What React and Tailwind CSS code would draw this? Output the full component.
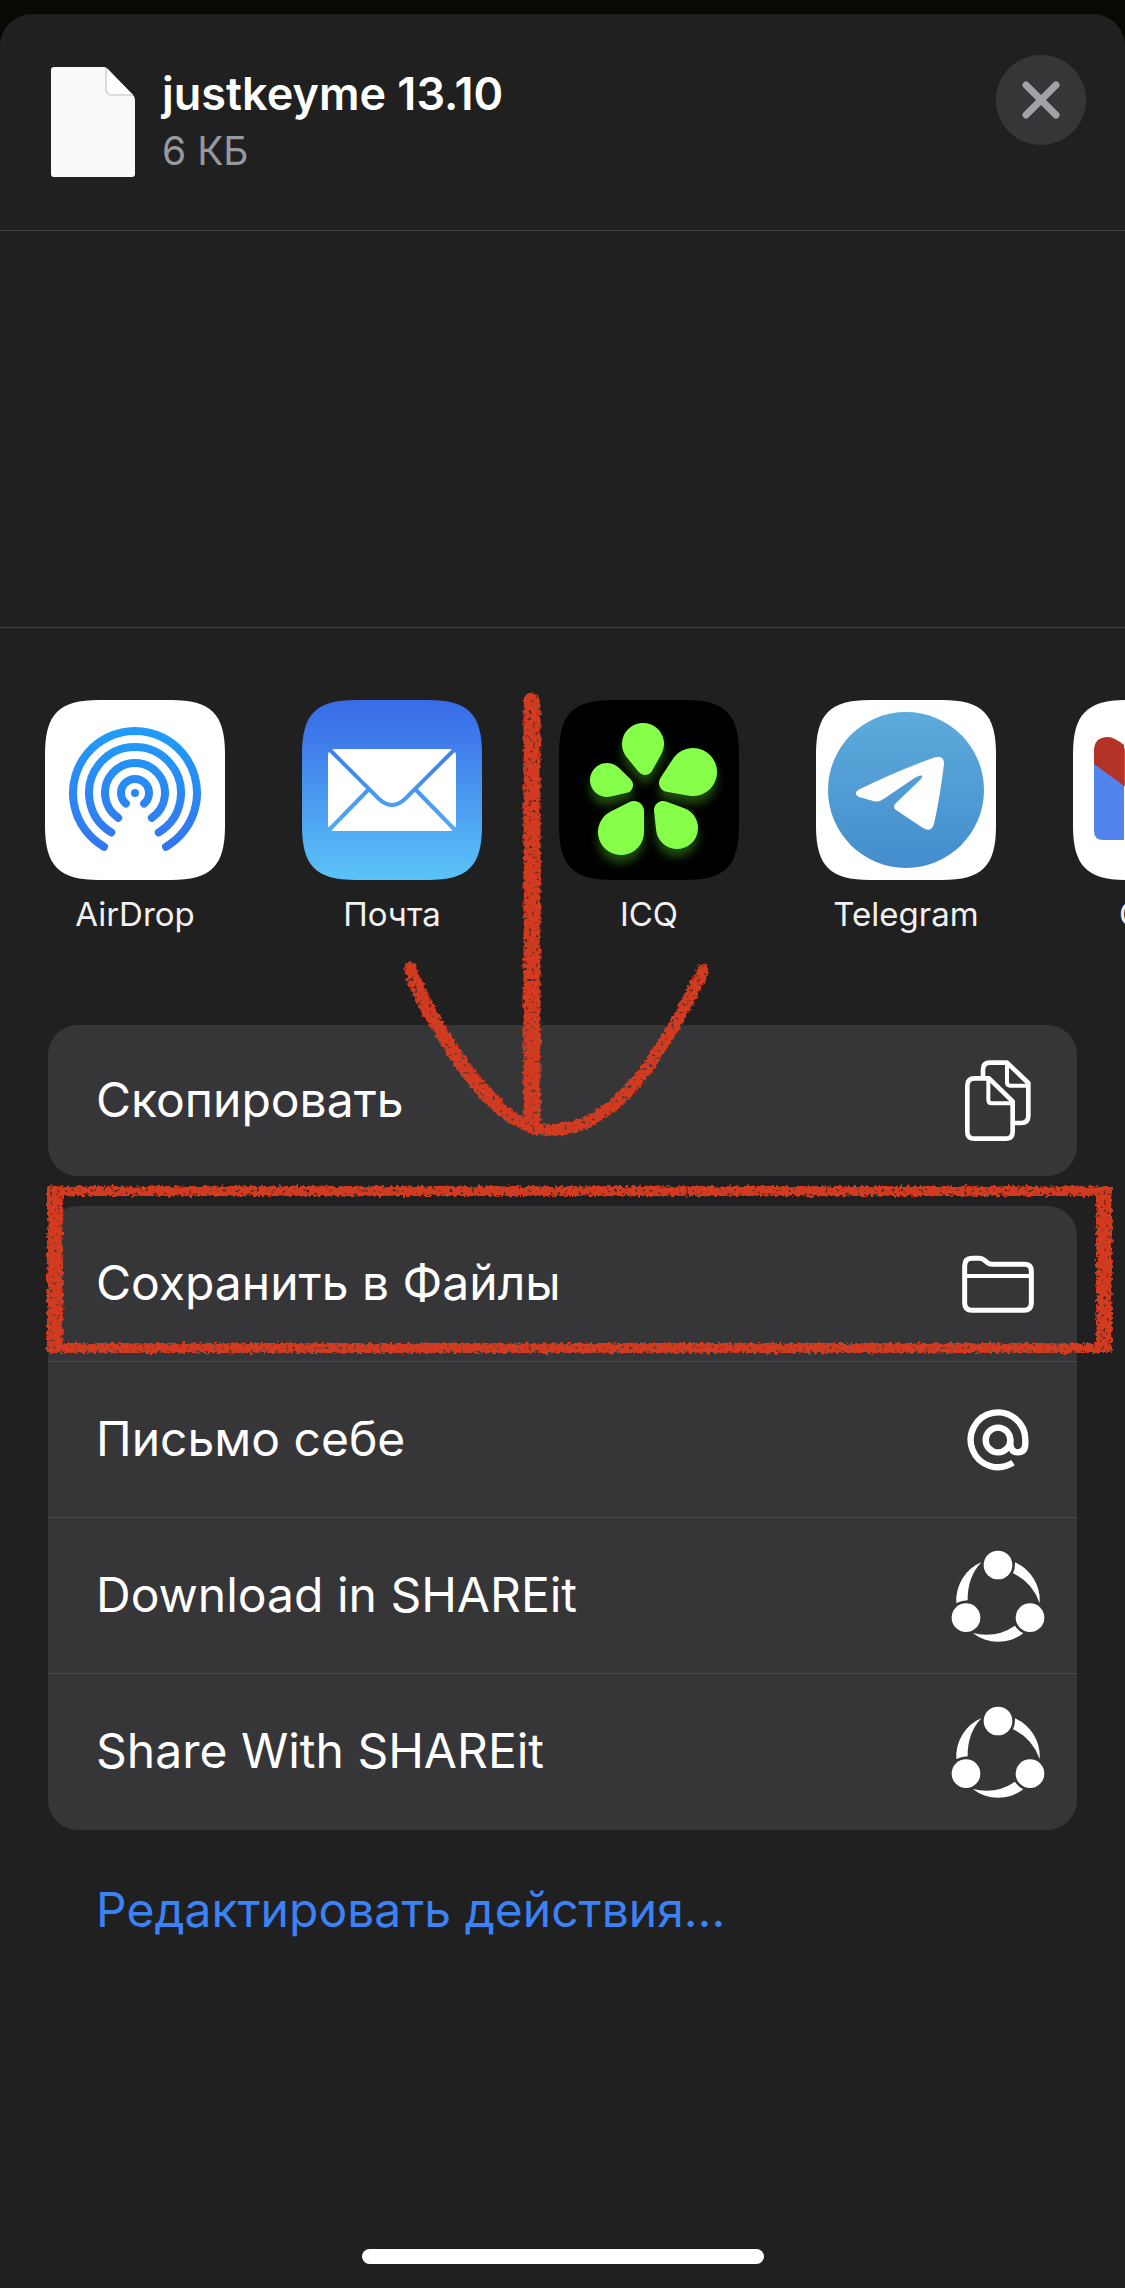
import React from "react";

// Outline around two circles joined by their outer tangents.
function petal(x1, y1, r1, x2, y2, r2) {
  const angle = Math.atan2(y2 - y1, x2 - x1);
  const spread = Math.acos((r1 - r2) / Math.hypot(x2 - x1, y2 - y1));
  const at = (x, y, r, t) => `${x + r * Math.cos(t)} ${y + r * Math.sin(t)}`;
  return `M${at(x1, y1, r1, angle + spread)} A${r1} ${r1} 0 1 1 ${at(x1, y1, r1, angle - spread)} L${at(x2, y2, r2, angle - spread)} A${r2} ${r2} 0 0 1 ${at(x2, y2, r2, angle + spread)} Z`;
}

function arc(r, degrees) {
  const t = (degrees * Math.PI) / 180;
  const dx = r * Math.sin(t);
  const dy = r * Math.cos(t);
  return `M${90 - dx} ${93 + dy} A${r} ${r} 0 1 1 ${90 + dx} ${93 + dy}`;
}

const SQUIRCLE =
  "M0 54 C0 14 14 0 54 0 H126 C166 0 180 14 180 54 V126 C180 166 166 180 126 180 H54 C14 180 0 166 0 126 Z";

function Tile({ fill, children }) {
  return (
    <svg viewBox="0 0 180 180" className="size-[180px]" aria-hidden="true">
      <path d={SQUIRCLE} fill={fill} />
      {children}
    </svg>
  );
}

function AirDropIcon() {
  return (
    <Tile fill="#fff">
      <defs>
        <linearGradient id="airdrop" gradientUnits="userSpaceOnUse" x1="0" y1="27" x2="0" y2="150">
          <stop offset="0" stopColor="#1f9df9" />
          <stop offset="1" stopColor="#3475ee" />
        </linearGradient>
      </defs>
      <g fill="none" stroke="url(#airdrop)" strokeWidth="8" strokeLinecap="round">
        <path d={arc(62, 30)} />
        <path d={arc(46, 31)} />
        <path d={arc(30, 34)} />
        <path d={arc(14, 41)} />
      </g>
      <circle cx="90" cy="93" r="4" fill="url(#airdrop)" />
    </Tile>
  );
}

function MailIcon() {
  return (
    <Tile fill="url(#mail)">
      <defs>
        <linearGradient id="mail" x1="0" y1="0" x2="0" y2="1">
          <stop offset="0" stopColor="#396de9" />
          <stop offset="0.2" stopColor="#3e79ea" />
          <stop offset="1" stopColor="#5bc4f8" />
        </linearGradient>
        <mask id="flaps">
          <rect x="26" y="49" width="128" height="82" rx="6" fill="#fff" />
          <g fill="none" stroke="#000" strokeWidth="4">
            <path d="M26 48 L77 99 Q90 111 103 99 L154 48" />
            <path d="M66 90 L26 131 M114 90 L154 131" />
          </g>
        </mask>
      </defs>
      <rect x="26" y="49" width="128" height="82" fill="#fff" mask="url(#flaps)" />
    </Tile>
  );
}

function IcqIcon() {
  const petals = [
    [84, 44, 21, 86, 67, 8],
    [134, 72, 24, 109, 83, 9],
    [48, 80, 17, 66, 85, 8],
    [62, 132, 23, 75, 111, 10],
    [118, 128, 21, 104, 110, 9],
  ];
  return (
    <Tile fill="#000">
      <defs>
        <filter id="glow" x="-20%" y="-20%" width="140%" height="150%">
          <feGaussianBlur stdDeviation="5" />
        </filter>
      </defs>
      <g fill="#3f9a1c" opacity="0.5" filter="url(#glow)" transform="translate(0 8)">
        {petals.map((p) => (
          <path key={p[0]} d={petal(...p)} />
        ))}
      </g>
      <g fill="#86ff4b">
        {petals.map((p) => (
          <path key={p[0]} d={petal(...p)} />
        ))}
      </g>
    </Tile>
  );
}

function TelegramIcon() {
  return (
    <Tile fill="#fff">
      <defs>
        <linearGradient id="telegram" x1="0" y1="0" x2="0" y2="1">
          <stop offset="0" stopColor="#5dabdc" />
          <stop offset="1" stopColor="#448dcd" />
        </linearGradient>
      </defs>
      <circle cx="90" cy="90" r="78" fill="url(#telegram)" />
      <path
        fill="#fff"
        d="M42 90 Q83 70 117 58 Q128 54 128 64 Q124 97 118 124 Q115 133 107 128 L80 110 Q76 107 80 103 L104 80 Q108 76 105 75.500 Q103 75 97 79 L69 98 Q64 102 59 101.500 L43 97 Q37 94 42 90 Z"
      />
    </Tile>
  );
}

function GmailIcon() {
  return (
    <Tile fill="#fff">
      <path d="M21 60 L51 83 V140 H30 Q21 140 21 131 Z" fill="#5384ee" />
      <path d="M159 60 L129 83 V140 H150 Q159 140 159 131 Z" fill="#58a55c" />
      <path d="M51 48 L90 77 L129 48 V86 L90 115 L51 86 Z" fill="#d95040" />
      <path d="M21 64 V51 Q21 37 35 37 Q41 37 51 45 V86 Z" fill="#b33329" />
      <path d="M159 64 V51 Q159 37 145 37 Q139 37 129 45 V86 Z" fill="#f1bd42" />
    </Tile>
  );
}

function FileIcon() {
  return (
    <svg viewBox="0 0 84 110" className="h-[110px] w-[84px] shrink-0" aria-hidden="true">
      <path d="M3 0 H53 Q55 0 57 2 L82 28 Q84 30 84 33 V107 Q84 110 81 110 H3 Q0 110 0 107 V3 Q0 0 3 0 Z" fill="#fafafa" />
      <path d="M55 1 V22 Q55 28 61 28 H82" fill="#fff" stroke="#dcdcdc" strokeWidth="2" />
    </svg>
  );
}

function CopyIcon() {
  return (
    <svg viewBox="195 183 198 243" className="h-[81px] w-[66px]" fill="none" stroke="#fff" aria-hidden="true">
      <g strokeWidth="14">
        <path d="M267 238 H224 Q202 238 202 260 V398 Q202 419 224 419 H316 Q338 419 338 398 V307 Z" strokeLinejoin="round" />
        <path d="M249 235 V212 Q249 191 270 191 H321 L385 252 V350 Q385 372 363 372 H344" strokeLinejoin="round" />
      </g>
      <g strokeWidth="12">
        <path d="M265 240 V303 Q265 313 275 313 H338" />
        <path d="M321 194 V250 Q321 260 331 260 H385" />
      </g>
    </svg>
  );
}

function FolderIcon() {
  return (
    <svg viewBox="186 763 216 174" className="h-[58px] w-[72px]" fill="none" stroke="#fff" aria-hidden="true">
      <path
        d="M194 796 Q194 773 216 773 H238 Q247 773 254 779 L262 786 Q268 791 277 791 H373 Q394 791 394 811 V907 Q394 929 372 929 H216 Q194 929 194 907 Z"
        strokeWidth="15"
      />
      <path d="M194 826 H394" strokeWidth="12" />
    </svg>
  );
}

function AtIcon() {
  return (
    <svg viewBox="201 147 186 186" className="size-[62px]" fill="none" stroke="#fff" strokeWidth="19" aria-hidden="true">
      <circle cx="294" cy="240" r="37" />
      <path d="M331 238 V252 Q333 277 353 277 Q376 277 376 250 V240 A82 82 0 1 0 339 308" />
    </svg>
  );
}

function ShareItIcon() {
  return (
    <svg viewBox="150 562 288 288" className="size-24" fill="#fff" aria-hidden="true">
      <circle cx="294" cy="613" r="43" />
      <circle cx="198" cy="771" r="43" />
      <circle cx="390" cy="771" r="43" />
      <path d="M169 727 A125 125 0 0 1 245 604 Q202 648 203 719 Q186 719 169 727 Z" />
      <path d="M345 605 A125 125 0 0 1 419 727 Q396 664 339 638 Q346 622 345 605 Z" />
      <path d="M218 817 A125 125 0 0 0 370 818 Q354 810 345 795 Q288 834 218 817 Z" />
    </svg>
  );
}

const apps = [
  { name: "AirDrop", Icon: AirDropIcon },
  { name: "Почта", Icon: MailIcon },
  { name: "ICQ", Icon: IcqIcon },
  { name: "Telegram", Icon: TelegramIcon },
  { name: "Gmail", Icon: GmailIcon },
];

const actions = [
  { name: "Сохранить в Файлы", Icon: FolderIcon },
  { name: "Письмо себе", Icon: AtIcon },
  { name: "Download in SHAREit", Icon: ShareItIcon },
  { name: "Share With SHAREit", Icon: ShareItIcon },
];

function ActionRow({ name, Icon }) {
  return (
    <button type="button" className="flex min-h-[151px] w-full items-center justify-between pr-[31px] pl-12 text-left text-5xl leading-[60px]">
      <span className="pb-0.5">{name}</span>
      <span className="flex w-24 shrink-0 justify-center">
        <Icon />
      </span>
    </button>
  );
}

// Hand-drawn crayon arrow and frame that lie over the sheet.
function Crayon() {
  return (
    <svg viewBox="0 0 1125 2288" className="pointer-events-none absolute top-0 left-0 w-full" fill="none" stroke="#d33b20" aria-hidden="true">
      <defs>
        <filter id="crayon" filterUnits="userSpaceOnUse" x="0" y="660" width="1125" height="720" colorInterpolationFilters="sRGB">
          <feTurbulence type="fractalNoise" baseFrequency="0.28" numOctaves="2" seed="4" result="noise" />
          <feDisplacementMap in="SourceGraphic" in2="noise" scale="6" xChannelSelector="R" yChannelSelector="G" result="rough" />
          <feColorMatrix in="noise" type="matrix" values="0 0 0 0 0  0 0 0 0 0  0 0 0 0 0  0 0 4 0 -0.600" result="grain" />
          <feComposite in="rough" in2="grain" operator="in" />
          <feGaussianBlur stdDeviation="0.4" />
        </filter>
      </defs>
      <g filter="url(#crayon)">
        <path d="M532 701 V1122" strokeWidth="17" strokeLinecap="round" />
        <path d="M410 968 C445 1052 495 1130 552 1130 C613 1130 661 1060 703 970" strokeWidth="12" strokeLinecap="round" />
        <path d="M412 976 C434 1024 462 1073 500 1107" strokeWidth="14" />
        <path d="M50 1191 H1108 M50 1348 H1108" strokeWidth="10" />
        <path d="M55 1187 V1352 M1104 1187 V1352" strokeWidth="16" />
      </g>
    </svg>
  );
}

export default function App() {
  return (
    <div className="relative min-h-screen overflow-hidden bg-[#060904] pt-3.5 font-['Inter','Liberation_Sans',sans-serif] text-white">
      <main className="flex min-h-[calc(100vh-14px)] flex-col rounded-t-[32px] bg-[#202020]">
        <header className="flex items-start border-b border-[#404041] pr-[39px] pb-[53px] pl-[51px]">
          <div className="flex grow items-start gap-[27px] pt-[53px]">
            <FileIcon />
            <div>
              <h1 className="text-[45px] leading-[54px] font-semibold">justkeyme 13.10</h1>
              <p className="pt-1 text-[39px] leading-[52px] text-[#98989f]">6 КБ</p>
            </div>
          </div>
          <button type="button" aria-label="Закрыть" className="mt-[41px] flex size-[90px] items-center justify-center rounded-full bg-[#363638]">
            <svg viewBox="0 0 38 38" className="size-[38px]" stroke="#a2a1a8" strokeWidth="7" strokeLinecap="round" aria-hidden="true">
              <path d="M4 4 L34 34 M34 4 L4 34" />
            </svg>
          </button>
        </header>

        <section className="h-[397px] border-b border-[#404041]" />

        <nav className="flex gap-[77px] overflow-hidden pt-[72px] pl-[45px]">
          {apps.map(({ name, Icon }) => (
            <button key={name} type="button" className="flex w-[180px] shrink-0 flex-col items-center gap-3.5 text-[33px] leading-10 text-[#f2f2f2]">
              <Icon />
              <span>{name}</span>
            </button>
          ))}
        </nav>

        <div className="mx-12 mt-[91px] flex flex-col gap-[30px]">
          <div className="overflow-hidden rounded-[30px] bg-[#363638]">
            <ActionRow name="Скопировать" Icon={CopyIcon} />
          </div>
          <div className="grid auto-rows-[156px] divide-y divide-[#4a4a4c] overflow-hidden rounded-[30px] bg-[#363638]">
            {actions.map((action) => (
              <ActionRow key={action.name} {...action} />
            ))}
          </div>
        </div>

        <a href="#edit" className="mt-[50px] pl-24 text-5xl leading-[60px] text-[#3b82f7]">
          Редактировать действия...
        </a>

        <div className="mt-auto mb-6 h-[15px] w-[402px] self-center rounded-full bg-white" />
      </main>
      <Crayon />
    </div>
  );
}
